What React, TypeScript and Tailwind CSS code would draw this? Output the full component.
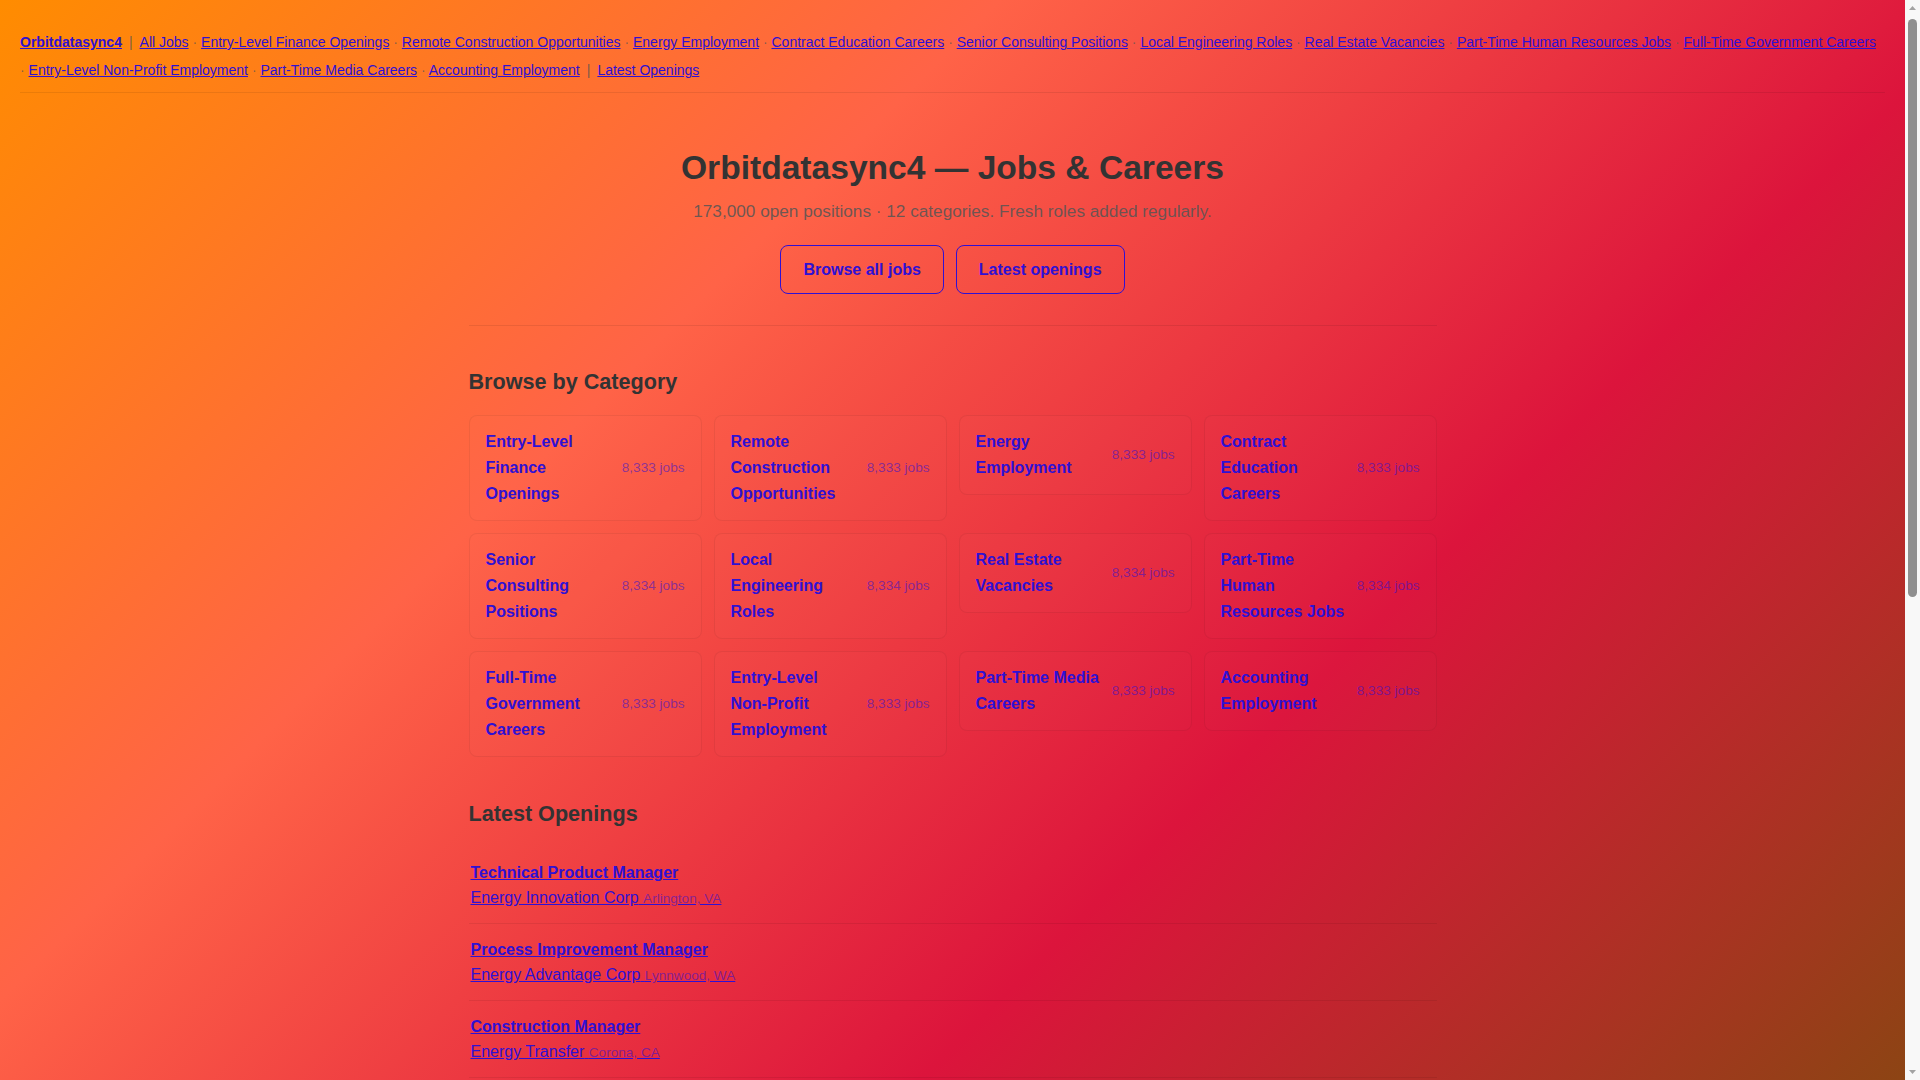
const categories = [
  { name: 'Entry-Level Finance Openings', count: '8,333' },
  { name: 'Remote Construction Opportunities', count: '8,333' },
  { name: 'Energy Employment', count: '8,333' },
  { name: 'Contract Education Careers', count: '8,333' },
  { name: 'Senior Consulting Positions', count: '8,334' },
  { name: 'Local Engineering Roles', count: '8,334' },
  { name: 'Real Estate Vacancies', count: '8,334' },
  { name: 'Part-Time Human Resources Jobs', count: '8,334' },
  { name: 'Full-Time Government Careers', count: '8,333' },
  { name: 'Entry-Level Non-Profit Employment', count: '8,333' },
  { name: 'Part-Time Media Careers', count: '8,333' },
  { name: 'Accounting Employment', count: '8,333' },
];

const jobs = [
  { title: 'Technical Product Manager', company: 'Energy Innovation Corp', place: 'Arlington, VA' },
  { title: 'Process Improvement Manager', company: 'Energy Advantage Corp', place: 'Lynnwood, WA' },
  { title: 'Construction Manager', company: 'Energy Transfer', place: 'Corona, CA' },
  { title: 'Financial Analyst', company: 'Summit Energy Group', place: 'Denver, CO' },
  { title: 'HR Coordinator', company: 'Northwind Utilities', place: 'Austin, TX' },
  { title: 'Civil Engineer', company: 'Bluepeak Engineering', place: 'Tacoma, WA' },
  { title: 'Real Estate Associate', company: 'Harbor Realty', place: 'Tampa, FL' },
  { title: 'Media Producer', company: 'Brightline Media', place: 'Atlanta, GA' },
  { title: 'Staff Accountant', company: 'Ledgerwise LLC', place: 'Columbus, OH' },
  { title: 'Program Coordinator', company: 'Open Hands Foundation', place: 'Portland, OR' },
];

const link = 'text-[#2f10d4]';

function Scrollbar() {
  return (
    <div className="w-[15px] shrink-0 bg-[#f8f8f8] flex flex-col items-center">
      <svg width="15" height="17" viewBox="0 0 15 17" className="shrink-0">
        <path d="M4 10 L7.5 6 L11 10 Z" fill="#a3a3a3" />
      </svg>
      <div className="w-[9px] h-[578px] mt-[2px] rounded-full bg-[#8f8f8f]" />
      <div className="flex-1" />
      <svg width="15" height="17" viewBox="0 0 15 17" className="shrink-0">
        <path d="M4 7 L7.5 11 L11 7 Z" fill="#a3a3a3" />
      </svg>
    </div>
  );
}

export default function App() {
  return (
    <div className="h-screen flex font-['Liberation_Sans',Arial,sans-serif] text-[#333]">
      <div className="flex-1 overflow-y-auto bg-fixed bg-[linear-gradient(135deg,#ff8c00,#ff6347,#dc143c,#8b4513)] [scrollbar-width:none]">
        <header className="px-5">
          <nav className="pt-[28px] pb-[8px] text-[14px] leading-[28px] border-b border-black/[0.08]">
            <a href="#" className={`${link} font-bold underline`}>Orbitdatasync4</a>
            <span className="mx-[7px] text-[#555]/80">|</span>
            <a href="#" className={`${link} underline`}>All Jobs</a>
            {categories.map((c) => (
              <span key={c.name}>
                {' '}
                <span className="whitespace-nowrap">
                  <span className="text-[#555]/70">·</span>{' '}
                  <a href="#" className={`${link} underline`}>{c.name}</a>
                </span>
              </span>
            ))}
            <span className="mx-[7px] text-[#555]/80">|</span>
            <a href="#" className={`${link} underline`}>Latest Openings</a>
          </nav>
        </header>

        <main className="max-w-[1000px] mx-auto px-4">
          <section className="pt-[55px] pb-[31px] text-center border-b border-black/[0.08]">
            <h1 className="text-[33.6px] leading-[1.2] font-bold text-[#333]">Orbitdatasync4 — Jobs &amp; Careers</h1>
            <p className="mt-[11px] text-[17.2px] leading-[1.5] text-[#555]/85">
              173,000 open positions · 12 categories. Fresh roles added regularly.
            </p>
            <div className="mt-[20px] flex justify-center gap-3">
              <a href="#" className={`h-[49px] px-[22px] flex items-center border border-[#2f10d4] rounded-lg font-bold text-[16px] ${link}`}>
                Browse all jobs
              </a>
              <a href="#" className={`h-[49px] px-[22px] flex items-center border border-[#2f10d4] rounded-lg font-bold text-[16px] ${link}`}>
                Latest openings
              </a>
            </div>
          </section>

          <section className="mt-[43px]">
            <h2 className="text-[21.6px] leading-[26px] font-bold text-[#333] mb-5">Browse by Category</h2>
            <div className="grid grid-cols-4 gap-3 items-start">
              {categories.map((c) => (
                <a
                  key={c.name}
                  href="#"
                  className="flex items-center justify-between gap-3 px-4 py-[13px] border border-black/[0.06] rounded-lg bg-white/[0.01]"
                >
                  <span className={`flex-1 font-bold text-[16px] leading-[26px] ${link}`}>{c.name}</span>
                  <span className="shrink-0 text-[13.6px] text-[#2f10d4]/55">{c.count} jobs</span>
                </a>
              ))}
            </div>
          </section>

          <section className="mt-[44px] pb-[120px]">
            <h2 className="text-[21.6px] leading-[26px] font-bold text-[#333] mb-5">Latest Openings</h2>
            <ul>
              {jobs.map((j) => (
                <li key={j.title} className="pl-[2px] pt-[14px] pb-[12px] border-b border-black/[0.07]">
                  <a href="#" className={`block font-bold text-[16px] leading-6 underline ${link}`}>{j.title}</a>
                  <a href="#" className={`inline-block mt-px text-[16px] leading-6 underline ${link}`}>
                    {j.company} <span className="text-[13.6px] text-[#2f10d4]/55">{j.place}</span>
                  </a>
                </li>
              ))}
            </ul>
            <div className="mt-8 text-center">
              <a href="#" className={`inline-flex h-[49px] px-[22px] items-center border border-[#2f10d4] rounded-lg font-bold text-[16px] ${link}`}>
                View all jobs
              </a>
            </div>
          </section>
        </main>

        <footer className="px-5 pb-10">
          <div className="border-t border-black/[0.08] pt-6 text-center text-[13.6px] text-[#555]/80">
            © Orbitdatasync4 · Jobs &amp; Careers
          </div>
        </footer>
      </div>
      <Scrollbar />
    </div>
  );
}
